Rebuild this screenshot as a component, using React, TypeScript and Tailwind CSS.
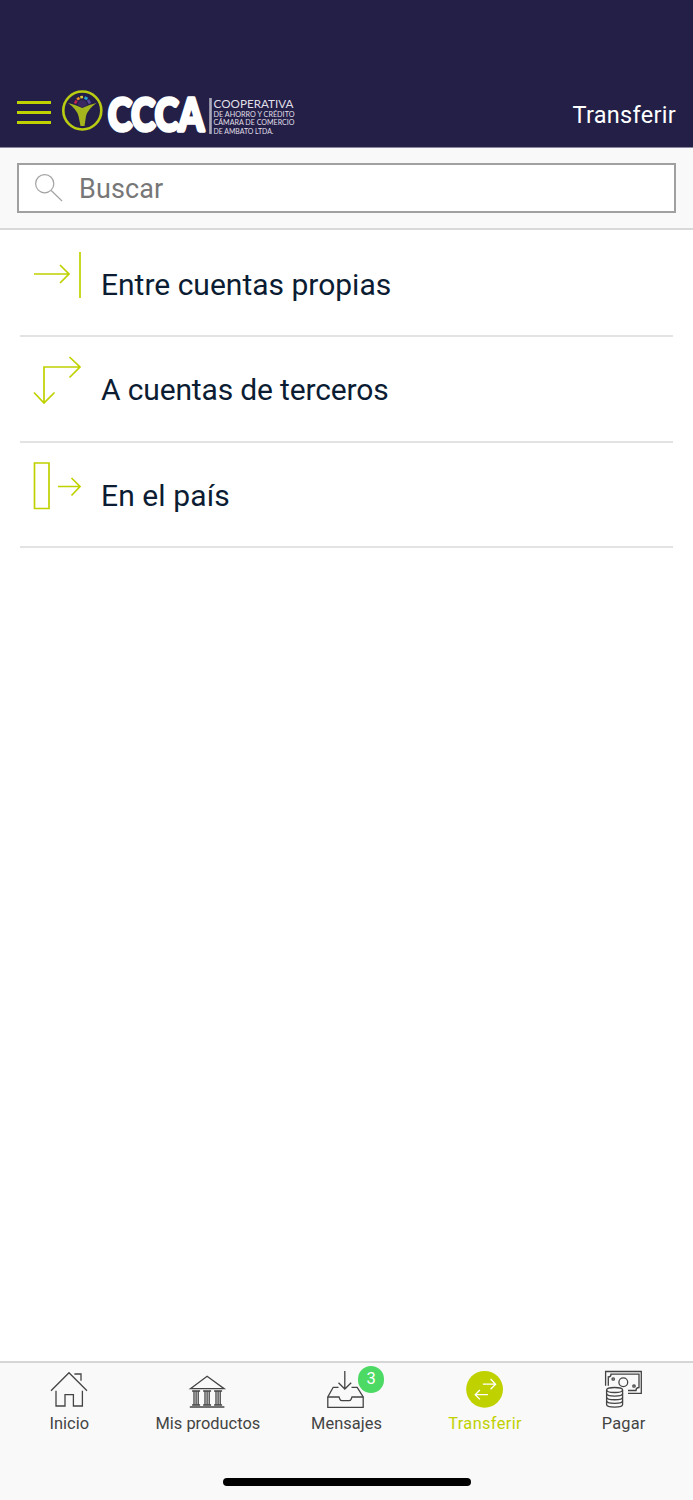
import type { ReactNode } from "react";

interface TransferOption {
	label: string;
	labelClass: string;
	icon: ReactNode;
}

interface Tab {
	label: string;
	labelClass: string;
	icon: ReactNode;
	badge?: number;
	active?: boolean;
}

const transferOptions: TransferOption[] = [
	{
		label: "Entre cuentas propias",
		labelClass: "tracking-normal",
		icon: <path d="M1 24H36M27 15L36 24L27 33M47 2V48" />,
	},
	{
		label: "A cuentas de terceros",
		labelClass: "tracking-[-0.15px]",
		icon: <path d="M11 48V12H47M36.5 2L47 12L36.5 22.5M1 37.5L11 48L21.5 37.5" />,
	},
	{
		label: "En el país",
		labelClass: "tracking-[0.1px]",
		icon: <path d="M1.5 2H16V47.5H1.5ZM25 25.5H47M38.5 17L47 25.5L38.5 34.5" />,
	},
];

const tabs: Tab[] = [
	{
		label: "Inicio",
		labelClass: "tracking-normal",
		icon: (
			<path d="M2 21.7L20 3.7L38 21.7M25.4 5H32V11.7M7 21.7V37H16V25.7H24.4V37H33.4V21.7" />
		),
	},
	{
		label: "Mis productos",
		labelClass: "tracking-normal",
		icon: (
			<>
				<path d="M2.4 19.7L19.1 7.3L36.1 19.7ZM1.8 38H36.4" />
				<path d="M4.1 22H12.1M4.1 36H12.1M6 22V36M8.1 22V36M10.2 22V36" />
				<path d="M15.1 22H23.1M15.1 36H23.1M17 22V36M19.1 22V36M21.2 22V36" />
				<path d="M26.1 22H34.1M26.1 36H34.1M28 22V36M30.1 22V36M32.2 22V36" />
			</>
		),
	},
	{
		label: "Mensajes",
		labelClass: "tracking-[0.05px]",
		badge: 3,
		icon: (
			<>
				<path d="M18.8 2V20M12.5 13.7L18.8 20L25.2 13.7" />
				<path d="M12.5 18.3H7.2L1.8 28V38.3H37.2V28L31.2 18.3H25.5" />
				<path d="M1.8 28H13L14 30.5Q14.5 31.7 16 31.7H23Q24.5 31.7 25 30.5L26 28H37.2" />
			</>
		),
	},
	{
		label: "Transferir",
		labelClass: "tracking-[0.35px]",
		active: true,
		icon: (
			<>
				<circle cx="19.6" cy="20.3" r="18.4" fill="#c0d100" stroke="none" />
				<path
					d="M17.9 15.2H30.4M25.6 10L30.6 15.2L25.6 20.3M22.9 25.7H10.4M14.9 21L10.2 25.7L14.9 30.4"
					stroke="#fff"
				/>
			</>
		),
	},
	{
		label: "Pagar",
		labelClass: "tracking-[0.2px]",
		icon: (
			<>
				<path d="M1.6 16.7V2.5H37.3V24.3H24" />
				<path d="M4.3 16.7V8Q7 8 7 5.2H35V18.5Q32 18.5 32 21.5H24" />
				<circle cx="19.3" cy="13.3" r="4.4" />
				<circle cx="9.2" cy="10" r="1.2" />
				<circle cx="30" cy="17" r="1.2" />
				<ellipse cx="10.6" cy="21" rx="8" ry="2.5" />
				<path d="M2.6 21V35.5C2.6 39 18.6 39 18.6 35.5V21" />
				<path d="M2.6 24.6C2.6 28 18.6 28 18.6 24.6M2.6 28.2C2.6 31.6 18.6 31.6 18.6 28.2M2.6 31.8C2.6 35.2 18.6 35.2 18.6 31.8" />
			</>
		),
	},
];

function Logo() {
	return (
		<svg width="236" height="48" viewBox="0 0 236 48" role="img" aria-label="CCCA">
			<circle cx="21.3" cy="24.5" r="19" fill="none" stroke="#b9cc11" strokeWidth="2.6" />
			<path
				d="M7 17Q14 18.5 21.3 22Q28.5 18.5 35.5 17Q27 23 25 30L23.5 40H19.500L17.500 30Q15.500 23 7 17Z"
				fill="#a5b51d"
			/>
			<path d="M16.500 19Q17.500 14 21.300 14Q25 14 26.500 19L21.300 21.500Z" fill="#3b2863" />
			<g fill="none" strokeWidth="2.6">
				<path d="M14 17.500L15.500 14.500" stroke="#c82350" />
				<path d="M16 13.500L18.500 11.800" stroke="#e78922" />
				<path d="M19.300 11.200L22 11" stroke="#dfc73a" />
				<path d="M23.500 11.500L26.500 13" stroke="#2ba6d7" />
				<path d="M27 14L29 17.500" stroke="#5947a0" />
			</g>
			<text
				x="47"
				y="44.500"
				textLength="96"
				lengthAdjust="spacingAndGlyphs"
				fill="#fff"
				stroke="#fff"
				strokeWidth="3.6"
				strokeLinejoin="round"
				fontFamily="Lato, sans-serif"
				fontWeight="900"
				fontSize="46"
			>
				CCCA
			</text>
			<path d="M149.500 12V48" stroke="#aaa8b8" strokeWidth="2.6" />
			<g fill="#e0dfe7" fontFamily="Lato, sans-serif">
				<text x="152.500" y="22" fontSize="11.500" textLength="80" lengthAdjust="spacingAndGlyphs">COOPERATIVA</text>
				<text x="152.500" y="30.800" fontSize="7.500" textLength="81" lengthAdjust="spacingAndGlyphs">DE AHORRO Y CRÉDITO</text>
				<text x="152.500" y="39.300" fontSize="7.500" textLength="81" lengthAdjust="spacingAndGlyphs">CÁMARA DE COMERCIO</text>
				<text x="152.500" y="47.700" fontSize="7.500" textLength="60" lengthAdjust="spacingAndGlyphs">DE AMBATO LTDA.</text>
			</g>
		</svg>
	);
}

function Header() {
	return (
		<header className="flex h-[148px] items-end border-b border-[#8a87a0] bg-[#231f47] px-[17px] text-white">
			<button aria-label="Menú" className="mb-[23px] flex w-[33.500px] flex-col gap-[7px]">
				<span className="h-[3px] w-full bg-[#c0d100]" />
				<span className="h-[3px] w-full bg-[#c0d100]" />
				<span className="h-[3px] w-full bg-[#c0d100]" />
			</button>
			<div className="mb-[13px] ml-[10.500px]">
				<Logo />
			</div>
			<h1 className="mb-[18px] ml-auto text-[23.500px] leading-[28px] tracking-[0.3px]">Transferir</h1>
		</header>
	);
}

function SearchBar() {
	return (
		<div className="h-[82px] border-b-2 border-[#d9d9d9] bg-[#f9f9f9] px-[17px] pt-[15px]">
			<label className="flex h-[50px] items-center border-2 border-[#a0a0a0] bg-white pl-4">
				<svg width="28" height="28" viewBox="0 0 28 28" fill="none" stroke="#a3a3a3" strokeWidth="1.2">
					<circle cx="9.700" cy="9.700" r="9.100" />
					<path d="M16.200 16.500L27 27" />
				</svg>
				<input
					type="text"
					placeholder="Buscar"
					className="ml-4 flex-1 bg-transparent pt-[2px] text-[27px] leading-8 tracking-[0.1px] outline-none placeholder:text-[#777]"
				/>
			</label>
		</div>
	);
}

function TransferRow({ label, labelClass, icon }: TransferOption) {
	return (
		<li className="flex h-[105.400px] items-start border-b-2 border-[#e3e3e3] pt-[18px] pl-[13px]">
			<svg width="49" height="50" viewBox="0 0 49 50" fill="none" stroke="#c0d100" strokeWidth="1.7">
				{icon}
			</svg>
			<span className={`mt-[17px] ml-[19px] text-[30px] leading-9 text-[#0b1c33] ${labelClass}`}>{label}</span>
		</li>
	);
}

function TabItem({ label, labelClass, icon, badge, active }: Tab) {
	return (
		<button className={`relative flex flex-1 flex-col items-center pt-[6px] ${active ? "text-[#c0d100]" : "text-[#444]"}`}>
			<svg width="40" height="40" viewBox="0 0 40 40" fill="none" stroke="currentColor" strokeWidth="1.3">
				{icon}
			</svg>
			<span className={`mt-[5px] text-[16.400px] leading-5 whitespace-nowrap ${labelClass}`}>{label}</span>
			{badge && (
				<span className="absolute top-[3px] left-[81px] flex h-[27px] w-[26px] items-center justify-center rounded-full bg-[#4cd964] text-[16.500px] text-white">
					{badge}
				</span>
			)}
		</button>
	);
}

export default function App() {
	return (
		<div className="flex h-[1500px] w-full flex-col bg-white font-[Roboto,sans-serif]">
			<Header />
			<SearchBar />
			<main className="flex-1 px-5 pt-[2px]">
				<ul>
					{transferOptions.map((option) => (
						<TransferRow key={option.label} {...option} />
					))}
				</ul>
			</main>
			<footer className="flex h-[139px] flex-col border-t-2 border-[#d6d6d6] bg-[#f9f9f9]">
				<nav className="flex">
					{tabs.map((tab) => (
						<TabItem key={tab.label} {...tab} />
					))}
				</nav>
				<div className="mx-auto mt-auto mb-[14px] h-2 w-[248px] rounded-full bg-black" />
			</footer>
		</div>
	);
}
